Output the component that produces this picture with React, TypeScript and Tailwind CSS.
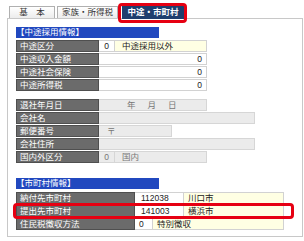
import React from "react"

const label = "shrink-0 bg-[#6b6b6b] border border-[#4f4f4f] text-white pl-[3px] leading-[10px]"
const white = "border border-l-0 border-[#d2d2d2] bg-white leading-[10px]"
const gray = "border border-l-0 border-[#d6d6d6] bg-[#ebebeb] text-[#777] leading-[10px]"
const yellow = "border border-l-0 border-[#d2d2d2] bg-[#ffffe3] leading-[10px]"

function Row({ name, w = "w-[83px]", children }: { name: string; w?: string; children?: React.ReactNode }) {
  return (
    <div className="flex h-[12px]">
      <div className={`${label} ${w}`}>{name}</div>
      {children}
    </div>
  )
}

export default function App() {
  return (
    <div className="relative w-[304px] h-[241px] bg-white text-[8.5px] text-[#222] font-['Liberation_Sans','Noto_Sans_CJK_JP',sans-serif] overflow-hidden">
      <div className="pt-[6px] pl-[7px]">
        {/* tabs */}
        <div className="flex h-[12px] pl-[2px]">
          <div className="w-[46px] border border-b-0 border-[#b0b0b0] bg-gradient-to-b from-white to-[#ececec] text-center leading-[11px] text-[#333]">
            基　本
          </div>
          <div className="ml-[2px] w-[61px] border border-b-0 border-[#b0b0b0] bg-gradient-to-b from-white to-[#ececec] text-center leading-[11px] text-[#333]">
            家族・所得税
          </div>
          <div className="ml-[4px] w-[62px] h-[13px] bg-[#1f3e6e] text-center leading-[13px] text-white font-bold">
            中途・市町村
          </div>
        </div>

        {/* panel */}
        <div className="w-[296px] h-[219px] border border-[#c8c8c8] pl-[8px] pt-[8px]">
          <div className="w-[143px] h-[11px] bg-[#2148bf] text-white leading-[11px]">【中途採用情報】</div>
          <div className="mt-[2px] flex flex-col gap-[1px]">
            <Row name="中途区分">
              <div className={`${white} w-[16px] text-center`}>0</div>
              <div className={`${yellow} w-[92px] pl-[7px]`}>中途採用以外</div>
            </Row>
            <Row name="中途収入金額">
              <div className={`${white} w-[108px] text-right pr-[4px]`}>0</div>
            </Row>
            <Row name="中途社会保険">
              <div className={`${white} w-[108px] text-right pr-[4px]`}>0</div>
            </Row>
            <Row name="中途所得税">
              <div className={`${white} w-[108px] text-right pr-[4px]`}>0</div>
            </Row>
          </div>

          <div className="mt-[8px] flex flex-col gap-[1px]">
            <Row name="退社年月日">
              <div className={`${gray} w-[108px] flex gap-[12px] pl-[28px]`}>
                <span>年</span>
                <span>月</span>
                <span>日</span>
              </div>
            </Row>
            <Row name="会社名">
              <div className={`${gray} w-[156px]`} />
            </Row>
            <Row name="郵便番号">
              <div className={`${gray} w-[73px] pl-[8px]`}>〒</div>
            </Row>
            <Row name="会社住所">
              <div className={`${gray} w-[156px]`} />
            </Row>
            <Row name="国内外区分">
              <div className={`${gray} w-[16px] text-center`}>0</div>
              <div className={`${gray} w-[92px] pl-[7px]`}>国内</div>
            </Row>
          </div>

          <div className="mt-[15px] w-[143px] h-[11px] bg-[#2148bf] text-white leading-[11px]">【市町村情報】</div>
          <div className="mt-[3px] flex flex-col gap-[1px]">
            <Row name="納付先市町村" w="w-[119px]">
              <div className={`${white} w-[49px] pl-[6px]`}>112038</div>
              <div className={`${yellow} w-[100px] pl-[4px]`}>川口市</div>
            </Row>
            <Row name="提出先市町村" w="w-[119px]">
              <div className={`${white} w-[49px] pl-[6px]`}>141003</div>
              <div className={`${yellow} w-[100px] pl-[4px]`}>横浜市</div>
            </Row>
            <Row name="住民税徴収方法" w="w-[119px]">
              <div className={`${white} w-[18px] pl-[4px]`}>0</div>
              <div className={`${yellow} w-[131px] pl-[4px]`}>特別徴収</div>
            </Row>
          </div>
        </div>
      </div>

      {/* red highlight marks */}
      <div className="absolute left-[118px] top-[3px] w-[69px] h-[20px] border-[3px] border-[#e60012] rounded-[4px]" />
      <div className="absolute left-[13px] top-[203px] w-[281px] h-[16px] border-[3px] border-[#e60012] rounded-[4px]" />
    </div>
  )
}
